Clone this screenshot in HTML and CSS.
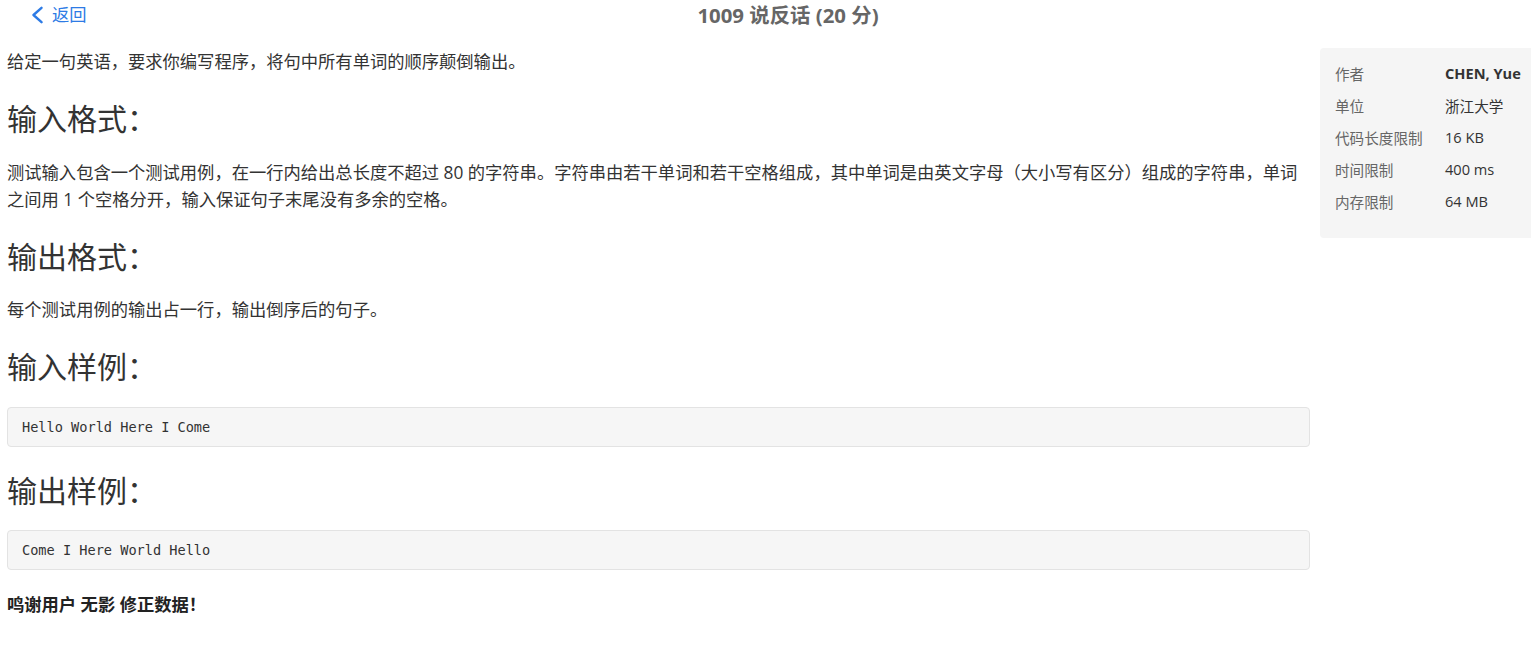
FILE: index.html
```html
<!DOCTYPE html>
<html lang="zh-CN">
<head>
<meta charset="utf-8">
<title>1009 说反话 (20 分)</title>
<link rel="stylesheet" href="styles.css">
</head>
<body>
<header class="topbar">
  <a class="back" href="#">
    <svg class="back-icon" width="12" height="18" viewBox="0 0 12 18" aria-hidden="true"><path d="M10.5 1.8 L2.5 9 L10.5 16.2" fill="none" stroke="currentColor" stroke-width="2.4" stroke-linecap="round" stroke-linejoin="round"/></svg>
    <span>返回</span>
  </a>
  <h1 class="title">1009 说反话 (20 分)</h1>
</header>
<div class="page">
  <main class="problem">
    <p class="text">给定一句英语，要求你编写程序，将句中所有单词的顺序颠倒输出。</p>
    <h2 class="section">输入格式：</h2>
    <p class="text">测试输入包含一个测试用例，在一行内给出总长度不超过 80 的字符串。字符串由若干单词和若干空格组成，其中单词是由英文字母（大小写有区分）组成的字符串，单词之间用 1 个空格分开，输入保证句子末尾没有多余的空格。</p>
    <h2 class="section">输出格式：</h2>
    <p class="text">每个测试用例的输出占一行，输出倒序后的句子。</p>
    <h2 class="section">输入样例：</h2>
    <pre class="code">Hello World Here I Come</pre>
    <h2 class="section">输出样例：</h2>
    <pre class="code">Come I Here World Hello</pre>
    <p class="text thanks"><strong>鸣谢用户 无影 修正数据！</strong></p>
  </main>
  <aside class="info">
    <dl class="info-list">
      <div class="row"><dt>作者</dt><dd class="strong">CHEN, Yue</dd></div>
      <div class="row"><dt>单位</dt><dd>浙江大学</dd></div>
      <div class="row"><dt>代码长度限制</dt><dd>16 KB</dd></div>
      <div class="row"><dt>时间限制</dt><dd>400 ms</dd></div>
      <div class="row"><dt>内存限制</dt><dd>64 MB</dd></div>
    </dl>
  </aside>
</div>
</body>
</html>
```

FILE: styles.css
```css
* { box-sizing: border-box; }
html, body { margin: 0; padding: 0; background: #fff; }
body {
  font-family: "Open Sans", "Noto Sans CJK SC", sans-serif;
  color: #333;
  width: 1531px;
  overflow: hidden;
}
.topbar {
  display: flex;
  align-items: center;
  height: 30px;
  padding-right: 45px;
}
.back {
  display: flex;
  align-items: center;
  width: 90px;
  padding-left: 31px;
  gap: 9px;
  color: #2d7be5;
  text-decoration: none;
  font-size: 17.3px;
  line-height: 28px;
}
.back-icon { display: block; }
.title {
  flex: 1;
  margin: 0;
  text-align: center;
  font-size: 20.4px;
  font-weight: 700;
  color: #666;
  line-height: 30px;
}
.page {
  display: flex;
  gap: 10px;
  padding: 18px 0 0 7px;
}
.problem {
  width: 1303px;
  flex: none;
}
.text {
  margin: 0;
  font-size: 17.3px;
  line-height: 27px;
  color: #333;
}
.section {
  margin: 26px 0 22.5px;
  font-size: 30px;
  font-weight: 400;
  line-height: 35px;
  color: #333;
}
.code {
  margin: 0;
  padding: 9px 14px;
  background: #f6f6f6;
  border: 1px solid #e3e3e3;
  border-radius: 4px;
  font-family: "DejaVu Sans Mono", monospace;
  font-size: 13.6px;
  line-height: 20px;
  color: #333;
}
.thanks { margin-top: 20.5px; }
.thanks strong { font-weight: 700; color: #222; }
.info {
  flex: 1;
  background: #f5f5f5;
  border-radius: 4px 0 0 4px;
  height: 190px;
  padding: 9px 0 21px 15px;
}
.info-list { margin: 0; }
.row {
  display: flex;
  height: 32px;
  align-items: center;
  font-size: 14.6px;
}
.row dt {
  width: 110px;
  color: #666;
}
.row dd {
  margin: 0;
  color: #333;
  white-space: nowrap;
}
.row dd.strong { font-weight: 700; }
```
